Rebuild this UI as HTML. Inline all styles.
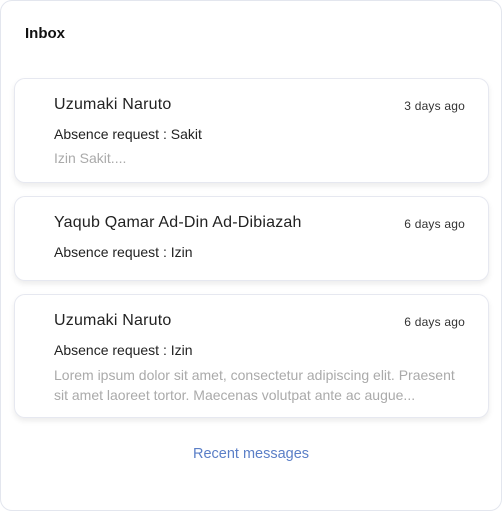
<!DOCTYPE html>
<html><head><style>
*{margin:0;padding:0;box-sizing:border-box}
body{width:502px;height:511px;background:#fff;font-family:"Liberation Sans",sans-serif;overflow:hidden}
.outer{position:absolute;left:0;top:0;width:502px;height:511px;border:1px solid #e3e6ee;border-radius:12px;background:#fff}
.title{position:absolute;left:25px;top:25px;font-size:15px;font-weight:bold;color:#111}
.card{position:absolute;left:14px;width:475px;border:1px solid #e6e8f0;border-radius:11px;background:#fff;box-shadow:0 3px 6px rgba(0,0,0,.08)}
.name{position:absolute;left:39px;font-size:16px;color:#222;letter-spacing:.2px}
.date{position:absolute;right:23px;font-size:12px;color:#333;letter-spacing:.2px}
.sub{position:absolute;left:39px;font-size:14px;color:#222}
.pre{position:absolute;left:39px;right:10px;font-size:14px;color:#aaa;line-height:20px}
.recent{position:absolute;left:0;width:502px;top:446px;text-align:center;font-size:14.5px;color:#5b7fc7}
</style></head><body>
<div class="outer"></div>
<div class="title">Inbox</div>
<div class="card" style="top:78px;height:105px">
<div class="name" style="top:17px">Uzumaki Naruto</div>
<div class="date" style="top:20px">3 days ago</div>
<div class="sub" style="top:47px">Absence request : Sakit</div>
<div class="pre" style="top:69px">Izin Sakit....</div>
</div>
<div class="card" style="top:196px;height:85px">
<div class="name" style="top:17px">Yaqub Qamar Ad-Din Ad-Dibiazah</div>
<div class="date" style="top:20px">6 days ago</div>
<div class="sub" style="top:47px">Absence request : Izin</div>
</div>
<div class="card" style="top:294px;height:124px">
<div class="name" style="top:17px">Uzumaki Naruto</div>
<div class="date" style="top:20px">6 days ago</div>
<div class="sub" style="top:47px">Absence request : Izin</div>
<div class="pre" style="top:70px">Lorem ipsum dolor sit amet, consectetur adipiscing elit. Praesent<br>sit amet laoreet tortor. Maecenas volutpat ante ac augue...</div>
</div>
<div class="recent">Recent messages</div>
</body></html>
